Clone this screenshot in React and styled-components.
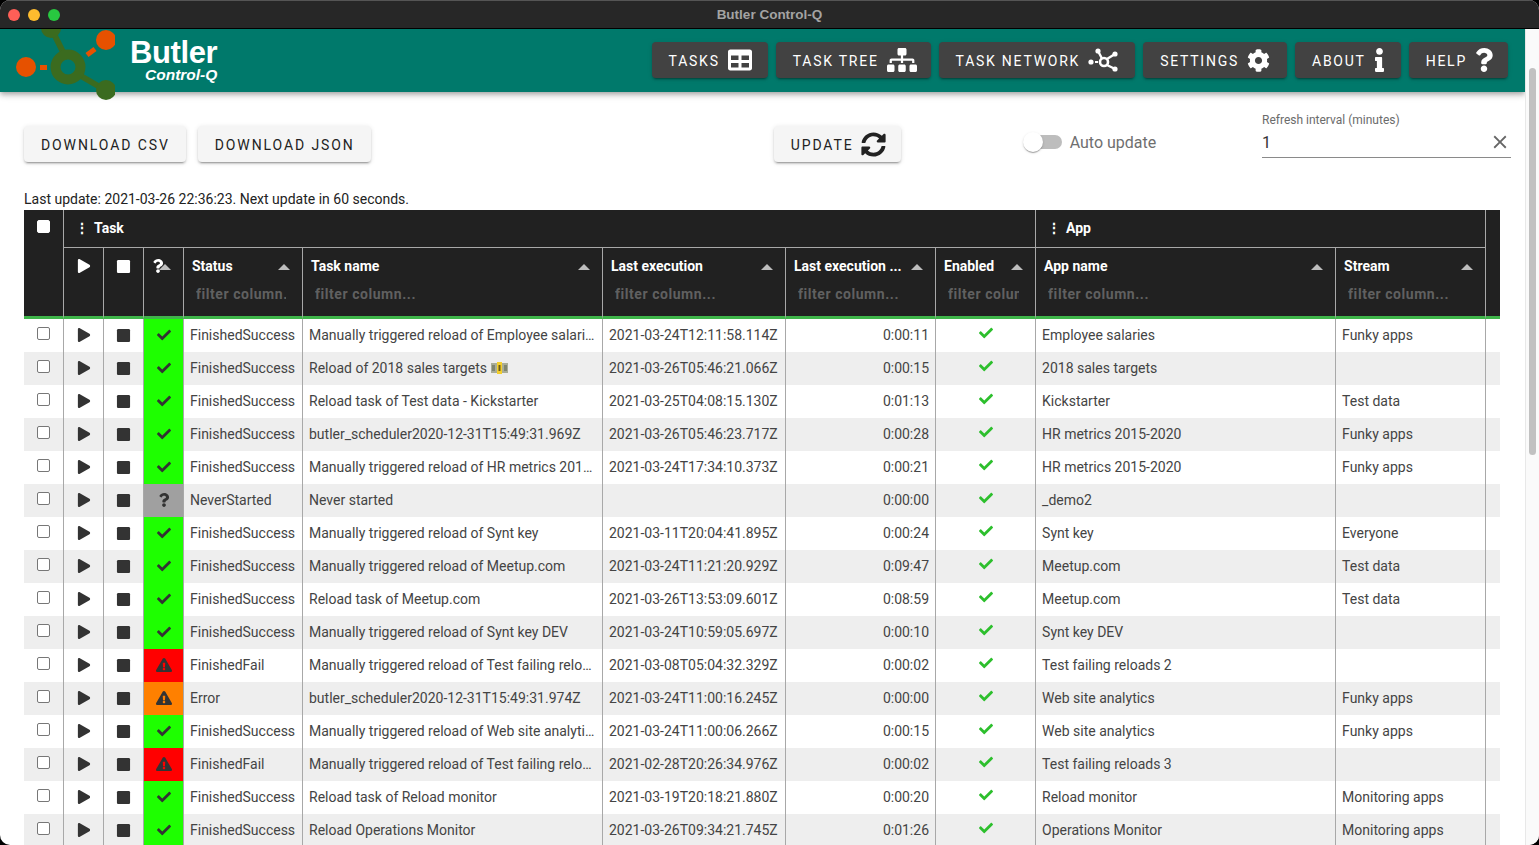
import styled, { createGlobalStyle } from "styled-components"
import {
    FaCheck, FaCog, FaExclamationTriangle, FaInfo, FaPlay, FaQuestion, FaSitemap, FaStop, FaSyncAlt, FaTable,
} from "react-icons/fa"
import { MdClose } from "react-icons/md"

const GlobalStyle = createGlobalStyle`
html, body {
    margin: 0;
    height: 845px;
    overflow: hidden;
    background: #000;
    font-family: Roboto, "Liberation Sans", sans-serif;
}
* { box-sizing: border-box; }
`

const Window = styled.div`
width: 1539px;
height: 845px;
border-radius: 10px;
overflow: hidden;
background: #fff;
display: flex;
flex-direction: column;
`

const TitleBar = styled.div`
position: relative;
z-index: 3;
flex: 0 0 29px;
background: #272727;
border-top: 1px solid #555;
border-bottom: 1px solid #000;
display: flex;
align-items: center;
padding-left: 8px;
gap: 8px;
`

const Light = styled.span`
width: 12px;
height: 12px;
border-radius: 50%;
background: ${p => p.$color};
`

const WindowTitle = styled.div`
flex: 1;
text-align: center;
color: #a3a3a3;
font: 700 13.5px "Liberation Sans", sans-serif;
margin-left: -68px;
padding-bottom: 1px;
`

const Body = styled.div`
flex: 1;
display: flex;
min-height: 0;
`

const Main = styled.div`
flex: 0 0 1525px;
min-width: 0;
overflow: hidden;
`

const Scrollbar = styled.div`
flex: 0 0 14px;
background: #fafafa;
border-left: 1px solid #e8e8e8;
padding: 39px 3px 0 3px;
`

const Thumb = styled.div`
height: 387px;
border-radius: 4px;
background: #c1c1c1;
`

const Header = styled.header`
position: relative;
z-index: 2;
height: 63px;
background: #00796b;
display: flex;
align-items: flex-start;
box-shadow: 0 2px 4px -1px rgba(0,0,0,.2), 0 4px 5px rgba(0,0,0,.14), 0 1px 10px rgba(0,0,0,.12);
`

const LogoMark = styled.svg`
flex: 0 0 115px;
width: 115px;
height: 72px;
`

const Brand = styled.div`
margin: 9px 0 0 15px;
color: #fff;
font-family: "Liberation Sans", sans-serif;
font-weight: 700;
`

const BrandName = styled.div`
font-size: 31px;
line-height: 30px;
letter-spacing: -0.4px;
`

const BrandSub = styled.div`
font-size: 15.5px;
line-height: 14px;
font-style: italic;
margin-left: 15px;
`

const Nav = styled.nav`
margin-left: auto;
margin-right: 17px;
margin-top: 13px;
display: flex;
gap: 8px;
`

const NavButton = styled.button`
height: 36px;
padding: 1px ${p => p.$right}px 0 17px;
border: 0;
border-radius: 4px;
background: #424242;
color: #fff;
font: 400 14px Roboto, sans-serif;
letter-spacing: 1.75px;
display: flex;
align-items: center;
gap: 8px;
box-shadow: 0 3px 1px -2px rgba(0,0,0,.2), 0 2px 2px rgba(0,0,0,.14), 0 1px 5px rgba(0,0,0,.12);
svg { display: block; margin-top: -1px; }
`

const InfoIcon = styled(FaInfo)`
width: 11px;
`

const HelpIcon = styled(FaQuestion)`
width: 18px;
`

const Toolbar = styled.div`
height: 103px;
padding: 11px 14px 0 24px;
display: flex;
align-items: flex-start;
`

const ActionButton = styled.button`
height: 36px;
margin-top: 23px;
margin-left: ${p => p.$left || 0}px;
padding: 1px ${p => p.$right || 16}px 0 17px;
border: 0;
border-radius: 4px;
background: #f5f5f5;
color: #222;
font: 400 14px Roboto, sans-serif;
letter-spacing: 1.9px;
display: flex;
align-items: center;
gap: 7px;
box-shadow: 0 3px 1px -2px rgba(0,0,0,.2), 0 2px 2px rgba(0,0,0,.14), 0 1px 5px rgba(0,0,0,.12);
svg { margin-top: -1px; }
`

const AutoUpdate = styled.label`
margin: 24px 0 0 122px;
height: 30px;
display: flex;
align-items: center;
color: #6f6f6f;
font-size: 16px;
`

const SwitchTrack = styled.span`
position: relative;
width: 34px;
height: 14px;
margin: 0 8px 0 5px;
border-radius: 7px;
background: #bdbdbd;
`

const SwitchThumb = styled.span`
position: absolute;
left: -5px;
top: -3px;
width: 20px;
height: 20px;
border-radius: 50%;
background: #fff;
box-shadow: 0 2px 1px -1px rgba(0,0,0,.2), 0 1px 1px rgba(0,0,0,.14), 0 1px 3px rgba(0,0,0,.12);
`

const IntervalField = styled.div`
margin-left: auto;
width: 249px;
padding-top: 10px;
`

const FieldLabel = styled.div`
font-size: 12px;
line-height: 14px;
color: #6b6b6b;
`

const FieldValue = styled.div`
height: 31px;
display: flex;
align-items: center;
justify-content: space-between;
border-bottom: 1px solid #8a8a8a;
font-size: 16px;
color: #333;
svg { color: #666; }
`

const LastUpdate = styled.div`
margin: -4px 0 0 24px;
height: 19px;
font-size: 14px;
line-height: 16px;
color: #222;
`

const Table = styled.table`
margin-left: 24px;
width: 1476px;
table-layout: fixed;
border-collapse: separate;
border-spacing: 0;
font-size: 14px;
`

const GroupCell = styled.th`
height: 38px;
padding: 0 0 1px 11px;
background: #212121;
color: #fff;
font-size: 14px;
font-weight: 700;
text-align: left;
border-left: 1px solid #a8a8a8;
border-bottom: 1px solid #a8a8a8;
vertical-align: middle;
`

const GroupDots = styled.span`
margin-right: 5px;
font-weight: 700;
`

const SelectCell = styled.th`
background: #212121;
vertical-align: top;
padding-top: 10px;
border-bottom: 3px solid #3fb54a;
text-align: center;
`

const FillerCell = styled.th`
background: #212121;
border-left: 1px solid #a8a8a8;
border-bottom: 3px solid #3fb54a;
`

const ColumnCell = styled.th`
height: 71px;
padding: 0;
background: #212121;
color: #fff;
font-size: 14px;
font-weight: 700;
text-align: left;
vertical-align: top;
border-left: 1px solid #a8a8a8;
border-bottom: 3px solid #3fb54a;
overflow: hidden;
`

const ColumnTop = styled.div`
position: relative;
height: 36px;
padding: 10px 28px 0 8px;
line-height: 16px;
white-space: nowrap;
overflow: hidden;
`

const SortArrow = styled.span`
position: absolute;
right: 12px;
top: 16px;
width: 0;
height: 0;
border-left: 6px solid transparent;
border-right: 6px solid transparent;
border-bottom: 6px solid #bdbdbd;
`

const FilterInput = styled.input`
display: block;
width: 100%;
height: 20px;
padding: 0 16px 0 12px;
border: 0;
outline: 0;
background: transparent;
color: #fff;
font: 700 14px Roboto, sans-serif;
letter-spacing: 0.55px;
&::placeholder { color: #606060; opacity: 1; }
`

const IconHead = styled.div`
position: relative;
height: 36px;
padding-top: 11px;
display: flex;
justify-content: center;
`

const QuestionHead = styled(IconHead)`
padding-right: 12px;
`

const Row = styled.tr`
background: ${p => (p.$odd ? "#eeeeee" : "#ffffff")};
`

const Cell = styled.td`
height: 33px;
padding: 0 6px 2px 6px;
color: #444;
text-align: ${p => p.$align || "left"};
white-space: nowrap;
overflow: hidden;
text-overflow: ellipsis;
border-left: 1px solid #a8a8a8;
`

const CheckCell = styled.td`
height: 33px;
padding: 0 0 4px;
text-align: center;
`

const IconCell = styled.td`
padding: 0 0 1px;
border-left: 1px solid #a8a8a8;
color: #333;
background: ${p => p.$bg || "transparent"};
svg { display: block; margin: 0 auto; }
`

const EnabledCell = styled.td`
padding: 0 0 6px;
border-left: 1px solid #a8a8a8;
color: #2dbf2d;
svg { display: block; margin: 0 auto; }
`

const Box = styled.input.attrs({ type: "checkbox" })`
appearance: none;
display: block;
width: 13px;
height: 13px;
margin: 0 auto;
border-radius: 2px;
background: #fff;
border: 1px solid ${p => (p.$head ? "#fff" : "#777")};
`

const Note = styled.svg`
display: inline-block;
vertical-align: -1px;
margin-left: 4px;
`

const Banknote = () => (
    <Note width="17" height="12" viewBox="0 0 17 12">
        <rect y="1" width="17" height="10" fill="#a9ad98" />
        <rect x="6" y="0" width="5" height="12" fill="#f4cf2c" />
        <rect x="1" y="3" width="3" height="6" fill="#7f8570" />
        <rect x="13" y="3" width="3" height="6" fill="#7f8570" />
        <rect x="7.5" y="3" width="2" height="6" fill="#6a5a1a" />
    </Note>
)

const NetworkIcon = () => (
    <svg width="30" height="24" viewBox="0 0 30 24" fill="#fff">
        <circle cx="3" cy="14" r="2.6" />
        <rect x="7" y="13" width="3" height="2" />
        <circle cx="16" cy="14" r="4" fill="none" stroke="#fff" strokeWidth="2.6" />
        <path d="M14 10.5 10 3M19 17l8 4M19 11l8-5" stroke="#fff" strokeWidth="2.4" fill="none" />
        <circle cx="10" cy="3" r="2.6" />
        <circle cx="27" cy="6" r="2.6" />
        <circle cx="27" cy="21" r="2.6" />
    </svg>
)

const Logo = () => (
    <LogoMark viewBox="0 29 115 72">
        <g fill="#e65100">
            <circle cx="26" cy="67" r="10" />
            <circle cx="106" cy="40" r="10" />
        </g>
        <path d="M40 67.5h7M87 55l8-6" stroke="#e65100" strokeWidth="5" fill="none" />
        <path d="M52 30l12 24M81 76l24 14" stroke="#3b6b1f" strokeWidth="6" fill="none" />
        <circle cx="68" cy="67" r="12.5" stroke="#3b6b1f" strokeWidth="10" fill="none" />
        <circle cx="51" cy="28" r="10" fill="#3b6b1f" />
        <circle cx="106" cy="90" r="10" fill="#3b6b1f" />
    </LogoMark>
)

const OK = "FinishedSuccess"
const FAIL = "FinishedFail"
const rows = [
    [OK, "Manually triggered reload of Employee salaries", "2021-03-24T12:11:58.114Z", "0:00:11", "Employee salaries", "Funky apps"],
    [OK, "Reload of 2018 sales targets", "2021-03-26T05:46:21.066Z", "0:00:15", "2018 sales targets", "", true],
    [OK, "Reload task of Test data - Kickstarter", "2021-03-25T04:08:15.130Z", "0:01:13", "Kickstarter", "Test data"],
    [OK, "butler_scheduler2020-12-31T15:49:31.969Z", "2021-03-26T05:46:23.717Z", "0:00:28", "HR metrics 2015-2020", "Funky apps"],
    [OK, "Manually triggered reload of HR metrics 2015-2020", "2021-03-24T17:34:10.373Z", "0:00:21", "HR metrics 2015-2020", "Funky apps"],
    ["NeverStarted", "Never started", "", "0:00:00", "_demo2", ""],
    [OK, "Manually triggered reload of Synt key", "2021-03-11T20:04:41.895Z", "0:00:24", "Synt key", "Everyone"],
    [OK, "Manually triggered reload of Meetup.com", "2021-03-24T11:21:20.929Z", "0:09:47", "Meetup.com", "Test data"],
    [OK, "Reload task of Meetup.com", "2021-03-26T13:53:09.601Z", "0:08:59", "Meetup.com", "Test data"],
    [OK, "Manually triggered reload of Synt key DEV", "2021-03-24T10:59:05.697Z", "0:00:10", "Synt key DEV", ""],
    [FAIL, "Manually triggered reload of Test failing reloads 2", "2021-03-08T05:04:32.329Z", "0:00:02", "Test failing reloads 2", ""],
    ["Error", "butler_scheduler2020-12-31T15:49:31.974Z", "2021-03-24T11:00:16.245Z", "0:00:00", "Web site analytics", "Funky apps"],
    [OK, "Manually triggered reload of Web site analytics", "2021-03-24T11:00:06.266Z", "0:00:15", "Web site analytics", "Funky apps"],
    [FAIL, "Manually triggered reload of Test failing reloads 3", "2021-02-28T20:26:34.976Z", "0:00:02", "Test failing reloads 3", ""],
    [OK, "Reload task of Reload monitor", "2021-03-19T20:18:21.880Z", "0:00:20", "Reload monitor", "Monitoring apps"],
    [OK, "Reload Operations Monitor", "2021-03-26T09:34:21.745Z", "0:01:26", "Operations Monitor", "Monitoring apps"],
]

const statusLook = {
    FinishedSuccess: { bg: "#1eff00", icon: <FaCheck size={14} /> },
    FinishedFail: { bg: "#ff0000", icon: <FaExclamationTriangle size={16} /> },
    Error: { bg: "#ff8000", icon: <FaExclamationTriangle size={16} /> },
    NeverStarted: { bg: "#a0a0a0", icon: <FaQuestion size={14} /> },
}

const columns = [
    { title: "Status", width: 119 },
    { title: "Task name", width: 300 },
    { title: "Last execution", width: 183 },
    { title: "Last execution ...", width: 150 },
    { title: "Enabled", width: 100 },
    { title: "App name", width: 300 },
    { title: "Stream", width: 150 },
]

const App = () => {
    return (
        <Window>
            <GlobalStyle />
            <TitleBar>
                <Light $color="#ff5f57" />
                <Light $color="#febc2e" />
                <Light $color="#28c840" />
                <WindowTitle>Butler Control-Q</WindowTitle>
            </TitleBar>
            <Body>
                <Main>
                    <Header>
                        <Logo />
                        <Brand>
                            <BrandName>Butler</BrandName>
                            <BrandSub>Control-Q</BrandSub>
                        </Brand>
                        <Nav>
                            <NavButton $right={16}>TASKS <FaTable size={24} /></NavButton>
                            <NavButton $right={14}>TASK TREE <FaSitemap size={30} /></NavButton>
                            <NavButton $right={17}>TASK NETWORK <NetworkIcon /></NavButton>
                            <NavButton $right={17}>SETTINGS <FaCog size={23} /></NavButton>
                            <NavButton $right={16}>ABOUT <InfoIcon size={24} /></NavButton>
                            <NavButton $right={15}>HELP <HelpIcon size={24} /></NavButton>
                        </Nav>
                    </Header>
                    <Toolbar>
                        <ActionButton>DOWNLOAD CSV</ActionButton>
                        <ActionButton $left={12}>DOWNLOAD JSON</ActionButton>
                        <ActionButton $left={403} $right={15}>UPDATE <FaSyncAlt size={25} /></ActionButton>
                        <AutoUpdate>
                            <SwitchTrack><SwitchThumb /></SwitchTrack>
                            Auto update
                        </AutoUpdate>
                        <IntervalField>
                            <FieldLabel>Refresh interval (minutes)</FieldLabel>
                            <FieldValue>1 <MdClose size={22} /></FieldValue>
                        </IntervalField>
                    </Toolbar>
                    <LastUpdate>Last update: 2021-03-26 22:36:23. Next update in 60 seconds.</LastUpdate>
                    <Table>
                        <colgroup>
                            <col width="39" />
                            <col width="40" />
                            <col width="40" />
                            <col width="40" />
                            {columns.map(c => <col key={c.title} width={c.width} />)}
                            <col width="15" />
                        </colgroup>
                        <thead>
                            <tr>
                                <SelectCell rowSpan={2}><Box $head /></SelectCell>
                                <GroupCell colSpan={8}><GroupDots>⋮</GroupDots>Task</GroupCell>
                                <GroupCell colSpan={2}><GroupDots>⋮</GroupDots>App</GroupCell>
                                <FillerCell rowSpan={2} />
                            </tr>
                            <tr>
                                <ColumnCell><IconHead><FaPlay size={14} /></IconHead></ColumnCell>
                                <ColumnCell><IconHead><FaStop size={15} /></IconHead></ColumnCell>
                                <ColumnCell>
                                    <QuestionHead><FaQuestion size={14} /><SortArrow /></QuestionHead>
                                </ColumnCell>
                                {columns.map(c => (
                                    <ColumnCell key={c.title}>
                                        <ColumnTop>{c.title}<SortArrow /></ColumnTop>
                                        <FilterInput placeholder="filter column..." readOnly />
                                    </ColumnCell>
                                ))}
                            </tr>
                        </thead>
                        <tbody>
                            {rows.map((r, i) => (
                                <Row key={i} $odd={i % 2 === 1}>
                                    <CheckCell><Box /></CheckCell>
                                    <IconCell><FaPlay size={14} /></IconCell>
                                    <IconCell><FaStop size={15} /></IconCell>
                                    <IconCell $bg={statusLook[r[0]].bg}>{statusLook[r[0]].icon}</IconCell>
                                    <Cell>{r[0]}</Cell>
                                    <Cell>{r[1]}{r[6] && <Banknote />}</Cell>
                                    <Cell>{r[2]}</Cell>
                                    <Cell $align="right">{r[3]}</Cell>
                                    <EnabledCell><FaCheck size={14} /></EnabledCell>
                                    <Cell>{r[4]}</Cell>
                                    <Cell>{r[5]}</Cell>
                                    <Cell />
                                </Row>
                            ))}
                        </tbody>
                    </Table>
                </Main>
                <Scrollbar><Thumb /></Scrollbar>
            </Body>
        </Window>
    )
}

export default App
